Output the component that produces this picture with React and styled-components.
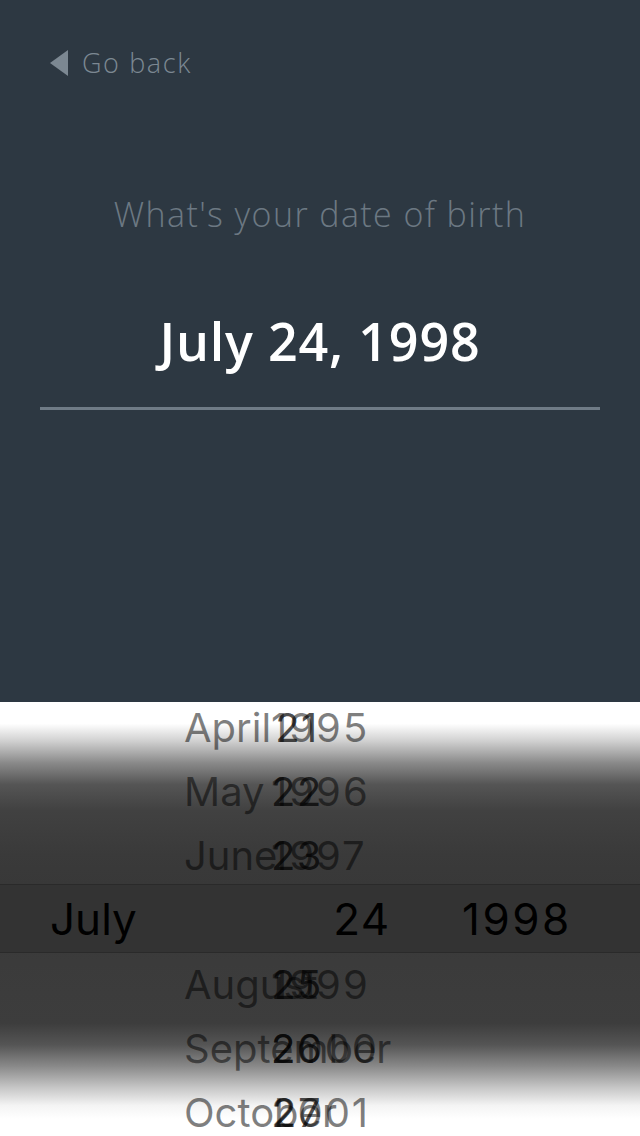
import React from "react";
import styled, { createGlobalStyle } from "styled-components";

const Global = createGlobalStyle`
  html, body { margin: 0; padding: 0; background: #ffffff; }
  body { width: 640px; height: 1136px; overflow: hidden; }
  * { box-sizing: border-box; }
`;

const Screen = styled.div`
  width: 640px;
  height: 1136px;
  display: flex;
  flex-direction: column;
  overflow: hidden;
`;

const Top = styled.section`
  height: 702px;
  flex: none;
  background: #2d3842;
  padding: 48px 40px 0;
  display: flex;
  flex-direction: column;
  font-family: "Open Sans", "Liberation Sans", sans-serif;
`;

const BackLink = styled.div`
  display: flex;
  align-items: center;
  gap: 14px;
  height: 30px;
  margin-left: 10px;
  color: #7c8892;
  font-size: 27px;
  font-weight: 300;
  line-height: 30px;
  letter-spacing: 1.6px;
`;

const Title = styled.h1`
  margin: 116px 0 0;
  text-align: center;
  font-size: 34px;
  font-weight: 300;
  line-height: 40px;
  letter-spacing: 1.4px;
  color: #6c7883;
`;

const Value = styled.div`
  margin-top: 77px;
  text-align: center;
  font-size: 52px;
  font-weight: 600;
  line-height: 60px;
  letter-spacing: 0.8px;
  color: #ffffff;
`;

const Divider = styled.div`
  margin-top: 36px;
  height: 3px;
  background: #6f7b86;
`;

const Picker = styled.section`
  flex: 1;
  overflow: hidden;
  background: linear-gradient(
    to bottom,
    #ffffff 0%,
    #ffffff 5%,
    #d0d0d0 9%,
    #8a8a8a 14%,
    #555555 19%,
    #414141 25%,
    #3a3a3a 35%,
    #383838 42%,
    #3b3b3b 60%,
    #3d3d3d 74%,
    #555555 79%,
    #8a8a8a 84%,
    #c8c8c8 89%,
    #f4f4f4 93%,
    #ffffff 96%
  );
  font-family: Inter, "Noto Sans", sans-serif;
`;

const List = styled.div`
  display: flex;
  flex-direction: column;
  margin-top: -6px;
`;

const Row = styled.div`
  display: grid;
  grid-template-columns: 1fr;
  align-items: center;
  height: ${(p) => (p.$selected ? "69px" : "64px")};
  ${(p) =>
    p.$selected &&
    `
    margin-top: -4px;
    background: #333333;
    border-top: 1px solid #2a2a2a;
    border-bottom: 1px solid #2a2a2a;
  `}
  font-size: ${(p) => (p.$selected ? "44px" : "40px")};
  line-height: 1;
`;

const Cell = styled.span`
  grid-area: 1 / 1;
  justify-self: start;
  margin-left: ${(p) => p.$left}px;
  width: ${(p) => (p.$width ? `${p.$width}px` : "auto")};
  text-align: ${(p) => p.$align || "left"};
  color: ${(p) => p.$color};
  letter-spacing: ${(p) => p.$spacing || 0}px;
  white-space: nowrap;
`;

const rows = [
  ["April", "21", "1995"],
  ["May", "22", "1996"],
  ["June", "23", "1997"],
  ["July", "24", "1998"],
  ["August", "25", "1999"],
  ["September", "26", "2000"],
  ["October", "27", "2001"],
];

function BackArrow() {
  return (
    <svg width="18" height="26" viewBox="0 0 18 26" aria-hidden="true">
      <polygon points="18,0 18,26 0,13" fill="#7c8892" />
    </svg>
  );
}

export default function App() {
  return (
    <Screen>
      <Global />
      <Top>
        <BackLink>
          <BackArrow />
          <span>Go back</span>
        </BackLink>
        <Title>What's your date of birth</Title>
        <Value>July 24, 1998</Value>
        <Divider />
      </Top>
      <Picker>
        <List>
          {rows.map(([m, d, y]) => {
            const sel = m === "July";
            return sel ? (
              <Row key={m} $selected>
                <Cell $left={50} $color="#000000">{m}</Cell>
                <Cell $left={322} $width={80} $align="center" $spacing={1.5} $color="#000000">{d}</Cell>
                <Cell $left={462} $spacing={2.5} $color="#000000">{y}</Cell>
              </Row>
            ) : (
              <Row key={m}>
                <Cell $left={184} $color="rgba(0,0,0,0.5)">{m}</Cell>
                <Cell $left={271} $spacing={2} $color="rgba(0,0,0,0.5)">{y}</Cell>
                <Cell $left={257} $width={80} $align="center" $spacing={1.5} $color="rgba(0,0,0,0.7)">{d}</Cell>
              </Row>
            );
          })}
        </List>
      </Picker>
    </Screen>
  );
}
